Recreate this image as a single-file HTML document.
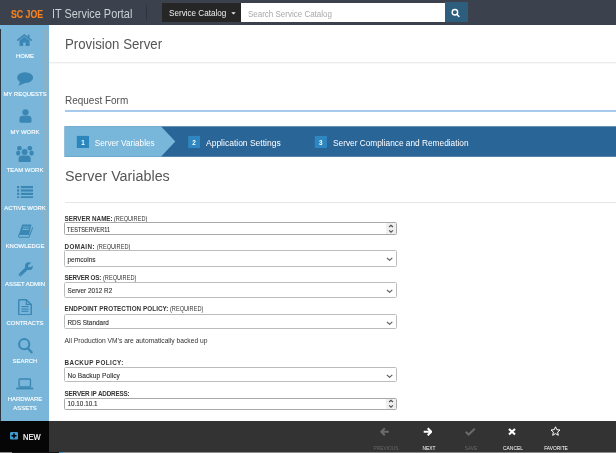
<!DOCTYPE html>
<html><head><meta charset="utf-8">
<style>
html,body{margin:0;padding:0;width:616px;height:453px;overflow:hidden;background:#fff;}
body{position:relative;font-family:"Liberation Sans",sans-serif;}
.a{position:absolute;}
.t{position:absolute;white-space:nowrap;line-height:1;transform-origin:0 0;}
.hdr{left:0;top:0;width:616px;height:25px;background:#3b424e;}
.side{left:0;top:25px;width:49px;height:396px;background:#79b6d9;}
.sl{position:absolute;left:-25px;width:100px;text-align:center;color:#fff;font-weight:normal;font-size:13px;line-height:13px;white-space:nowrap;transform:scale(0.458,0.475);transform-origin:50% 0;-webkit-text-stroke:0.3px #fff;}
.ico{position:absolute;fill:#3a87b5;}
.lbl{position:absolute;font-size:6.3px;line-height:6.3px;color:#333;white-space:nowrap;}
.lbl b{font-weight:bold;}
.lbl span{color:#333;font-size:6.3px;display:inline-block;transform:scaleX(0.89);transform-origin:0 50%;}
.inp{position:absolute;left:64px;width:333px;border:1px solid #bcbcbc;border-radius:1.5px;background:#fff;box-sizing:border-box;}
.val{position:absolute;left:67.4px;font-size:6.3px;line-height:6.3px;color:#333;white-space:nowrap;-webkit-text-stroke:0.12px #333;letter-spacing:0.05px;}
.bb{position:absolute;text-align:center;width:40px;font-size:6.1px;line-height:6.1px;white-space:nowrap;transform:scaleX(0.8);transform-origin:50% 0;}
</style></head><body>
<div id="w" style="position:absolute;left:0;top:0;width:616px;height:453px;will-change:transform">
<!-- header -->
<div class="a hdr"></div>
<div class="t" style="left:11.2px;top:9.6px;font-size:10.2px;font-weight:bold;color:#f7811e;transform:scaleX(0.86);-webkit-text-stroke:0.15px #f7811e">SC JOE</div>
<div class="t" style="left:51.6px;top:7.5px;font-size:12.3px;color:#cdd1d5;transform:scaleX(0.886)">IT Service Portal</div>
<div class="a" style="left:146px;top:5px;width:1px;height:15px;background:#2e343d"></div>
<div class="a" style="left:162px;top:3px;width:79px;height:19px;background:#262626"></div>
<div class="t" style="left:168.8px;top:8.6px;font-size:8.5px;color:#f0f0f0;transform:scaleX(0.955)">Service Catalog</div>
<svg class="a" style="left:230.5px;top:12px" width="5" height="3" viewBox="0 0 5 3"><path d="M0.3 0.2H4.7L2.5 2.6Z" fill="#eee"/></svg>
<div class="a" style="left:241px;top:3px;width:204px;height:18.5px;background:#fff"></div>
<div class="t" style="left:248.4px;top:9.9px;font-size:8.9px;color:#a8a8a8;transform:scaleX(0.9)">Search Service Catalog</div>
<div class="a" style="left:445px;top:2.3px;width:23px;height:19.6px;background:#2e5e7e"></div>
<svg class="a" style="left:451px;top:7px" width="11" height="11" viewBox="0 0 11 11"><circle cx="3.9" cy="5.2" r="2.75" fill="none" stroke="#fff" stroke-width="1.35"/><path d="M5.9 7.3L7.9 9.4" stroke="#fff" stroke-width="1.4" stroke-linecap="round"/></svg>

<!-- sidebar -->
<div class="a side"></div>
<div class="a" style="left:0;top:29px;width:1px;height:392px;background:#2a3640"></div>
<div class="a" style="left:44px;top:29px;width:3.5px;height:279.5px;background:#8ab2c7"></div>

<!-- home -->
<svg class="ico" style="left:17px;top:34px" width="15" height="12.5" viewBox="0 0 15 12.5"><path d="M0.8 6.1L7.2 1.1L14.2 6.1" fill="none" stroke="#3a87b5" stroke-width="1.7" stroke-linecap="round"/><rect x="10.8" y="0.6" width="1.7" height="3.4"/><path d="M2.5 6.4L7.2 2.7L12.6 6.4V11.9H8.6V8.5H6.2V11.9H2.5Z"/></svg>
<div class="sl" style="top:52.87px">HOME</div>
<!-- requests -->
<svg class="ico" style="left:17px;top:72px" width="16.2" height="14" viewBox="0 0 16.2 14"><ellipse cx="8.1" cy="5.6" rx="8" ry="5.4"/><path d="M3.8 8.8L1.3 13.7L9.5 10.6Z"/></svg>
<div class="sl" style="top:90.77px">MY REQUESTS</div>
<!-- my work -->
<svg class="ico" style="left:18.5px;top:109.3px" width="13" height="14" viewBox="0 0 13 14"><path d="M0.4 10C0.4 7.8 1.9 6.7 3.5 6.7H9.4C11 6.7 12.5 7.8 12.5 10V12.3C12.5 13.1 12 13.7 11.2 13.7H1.7C0.9 13.7 0.4 13.1 0.4 12.3Z"/><circle cx="6.5" cy="3.3" r="3.1" stroke="#79b6d9" stroke-width="0.7" paint-order="stroke"/></svg>
<div class="sl" style="top:128.77px">MY WORK</div>
<!-- team work -->
<svg class="ico" style="left:16.3px;top:146.3px" width="17.8" height="16.2" viewBox="0 0 17.8 16.2"><circle cx="3.45" cy="2.2" r="2.3"/><circle cx="13.85" cy="2.2" r="2.3"/><ellipse cx="2.2" cy="7.1" rx="2.2" ry="2.6"/><ellipse cx="15.6" cy="7.1" rx="2.2" ry="2.6"/><path d="M2.6 12.4C2.6 10.4 4 9.4 5.6 9.4H11.7C13.3 9.4 14.7 10.4 14.7 12.4V14.9C14.7 15.7 14.2 16.2 13.4 16.2H3.9C3.1 16.2 2.6 15.7 2.6 14.9Z" stroke="#79b6d9" stroke-width="0.7" paint-order="stroke"/><circle cx="8.6" cy="5.9" r="3" stroke="#79b6d9" stroke-width="0.8" paint-order="stroke"/></svg>
<div class="sl" style="top:167.37px">TEAM WORK</div>
<!-- active work -->
<svg class="ico" style="left:17px;top:185.7px" width="16.2" height="12.5" viewBox="0 0 16.2 12.5"><rect x="0" y="0" width="2.2" height="2.2"/><rect x="3.8" y="0" width="12.4" height="2.2"/><rect x="0" y="3.4" width="2.2" height="2.2"/><rect x="3.8" y="3.4" width="12.4" height="2.2"/><rect x="0" y="6.8" width="2.2" height="2.2"/><rect x="3.8" y="6.8" width="12.4" height="2.2"/><rect x="0" y="10.3" width="2.2" height="2.2"/><rect x="3.8" y="10.3" width="12.4" height="2.2"/></svg>
<div class="sl" style="top:205.37px">ACTIVE WORK</div>
<!-- knowledge -->
<svg class="ico" style="left:17.7px;top:223.7px" width="15.5" height="14" viewBox="0 0 15.5 14"><path d="M4.3 0.4H12.7C13.2 0.4 13.4 0.8 13.3 1.3L11 11H0.6Z"/><path d="M0.8 10.9C0.2 12.3 0.8 13.2 1.9 13.2H10.9L14.8 3.4" fill="none" stroke="#3a87b5" stroke-width="1.05"/><path d="M5.1 2.4H11.6L11.3 3.6H4.8Z" fill="#70b1d6"/><path d="M4.5 4.8H11L10.7 6H4.2Z" fill="#70b1d6"/></svg>
<div class="sl" style="top:243.37px">KNOWLEDGE</div>
<!-- asset admin -->
<svg class="ico" style="left:17.7px;top:262px" width="15" height="15" viewBox="0 0 15 15"><path d="M2.3 12.6L8.6 6.5" stroke="#3a87b5" stroke-width="3.2" stroke-linecap="round"/><circle cx="10.9" cy="4.2" r="3.9"/><path d="M10.6 3.9L13.2 0.2L16 3L12 5.4Z" fill="#79b6d9"/><circle cx="11.3" cy="3.8" r="1.3" fill="#79b6d9"/><circle cx="2.3" cy="12.6" r="0.5" fill="#79b6d9"/></svg>
<div class="sl" style="top:281.37px">ASSET ADMIN</div>
<!-- contracts -->
<svg class="ico" style="left:18px;top:298.7px" width="14.2" height="16.5" viewBox="0 0 14.2 16.5"><path d="M1.6 0.75H8.3L13.25 5.6V14.9C13.25 15.4 13 15.6 12.6 15.6H1.4C1 15.6 0.75 15.4 0.75 14.9V1.6C0.75 1.1 1 0.75 1.6 0.75Z" fill="none" stroke="#3a87b5" stroke-width="1.4" stroke-linejoin="round"/><path d="M8.3 0.9V5.3H13.1" fill="none" stroke="#3a87b5" stroke-width="1.2"/><rect x="3.5" y="7" width="7" height="1.15"/><rect x="3.5" y="9.5" width="7" height="1.15"/><rect x="3.5" y="11.7" width="7" height="1.15"/></svg>
<div class="sl" style="top:319.67px">CONTRACTS</div>
<!-- search -->
<svg class="ico" style="left:17.7px;top:337.7px" width="15.5" height="16" viewBox="0 0 15.5 16"><circle cx="6.2" cy="6.2" r="5.1" fill="none" stroke="#3a87b5" stroke-width="2"/><path d="M9.8 10.2L13.6 14.3" stroke="#3a87b5" stroke-width="2.2" stroke-linecap="round"/></svg>
<div class="sl" style="top:357.67px">SEARCH</div>
<!-- hardware -->
<svg class="ico" style="left:16.4px;top:377.5px" width="17.5" height="12" viewBox="0 0 17.5 12"><rect x="3.05" y="0.95" width="11.4" height="8" rx="1" fill="none" stroke="#3a87b5" stroke-width="1.35"/><rect x="0.2" y="9.6" width="17" height="1.8"/></svg>
<div class="sl" style="top:395.97px">HARDWARE</div>
<div class="sl" style="top:405.07px">ASSETS</div>

<!-- main -->
<div class="t" style="left:64.7px;top:36.6px;font-size:14.4px;color:#555;transform:scaleX(0.92)">Provision Server</div>
<div class="a" style="left:49px;top:62px;width:567px;height:1px;background:#ececec"></div><div class="a" style="left:49px;top:63px;width:567px;height:1px;background:#f8f8f8"></div>
<div class="t" style="left:64.5px;top:95.1px;font-size:10.5px;color:#505050;transform:scaleX(0.95)">Request Form</div>
<div class="a" style="left:64.5px;top:110px;width:552px;height:2px;background:#a4cbec"></div>

<!-- steps -->
<svg class="a" style="left:0;top:0" width="616" height="160" viewBox="0 0 616 160"><rect x="64.6" y="126.3" width="551.4" height="30.5" fill="#2a6598"/><path d="M64.6 126.3H160.9L175.3 141.55L160.9 156.8H64.6Z" fill="#79b7da"/><rect x="76.8" y="135.9" width="12.2" height="12.1" fill="#2a86bd"/><rect x="188.2" y="135.9" width="11.8" height="12.1" fill="#2e87c0"/><rect x="314.8" y="135.9" width="12.1" height="12.1" fill="#2e87c0"/></svg>
<div class="t" style="left:76.8px;top:140.1px;width:12.2px;text-align:center;font-size:6.3px;font-weight:bold;color:#fff">1</div>
<div class="t" style="left:94.7px;top:139.9px;font-size:8.2px;color:#fff">Server Variables</div>
<div class="t" style="left:188.2px;top:140.1px;width:11.8px;text-align:center;font-size:6.3px;font-weight:bold;color:#fff">2</div>
<div class="t" style="left:206px;top:139.1px;font-size:8.5px;color:#fff">Application Settings</div>
<div class="t" style="left:314.8px;top:140.1px;width:12.1px;text-align:center;font-size:6.3px;font-weight:bold;color:#fff">3</div>
<div class="t" style="left:333px;top:139.1px;font-size:8.3px;color:#fff">Server Compliance and Remediation</div>

<div class="t" style="left:65px;top:168.3px;font-size:15.4px;color:#555;transform:scaleX(0.93)">Server Variables</div>
<div class="a" style="left:65px;top:202px;width:551px;height:1px;background:#e6e6e6"></div>

<!-- form -->
<div class="lbl" style="left:64.5px;top:216.1px"><b>SERVER NAME:</b> <span>(REQUIRED)</span></div>
<div class="inp" style="top:222.3px;height:12.5px;border-color:#a9a9a9"></div>
<div class="a" style="left:386px;top:223px;width:10px;height:11px;background:#efefef"></div>
<svg class="a" style="left:388px;top:223.8px" width="6" height="9" viewBox="0 0 6 9"><path d="M1.1 3L3 1.3L4.9 3M1.1 6.4L3 8.1L4.9 6.4" fill="none" stroke="#505050" stroke-width="1.25"/></svg>
<div class="val" style="top:227.1px;font-size:6.3px;transform:scaleX(0.88);transform-origin:0 0">TESTSERVER11</div>

<div class="lbl" style="left:64.5px;top:244.1px"><b style="letter-spacing:0.4px">DOMAIN:</b> <span>(REQUIRED)</span></div>
<div class="inp" style="top:250.3px;height:16.6px"></div>
<div class="val" style="top:256.9px;font-size:6.5px">pemcoins</div>
<svg class="a" style="left:386px;top:257.4px" width="7" height="4" viewBox="0 0 7 4"><path d="M0.9 0.8L3.6 3.3L6.3 0.8" fill="none" stroke="#5a5a5a" stroke-width="1.15"/></svg>

<div class="lbl" style="left:64.5px;top:274.5px"><b style="letter-spacing:-0.22px">SERVER OS:</b> <span>(REQUIRED)</span></div>
<div class="inp" style="top:282.4px;height:15.6px"></div>
<div class="val" style="top:288.3px;font-size:6.3px">Server 2012 R2</div>
<svg class="a" style="left:386px;top:289.4px" width="7" height="4" viewBox="0 0 7 4"><path d="M0.9 0.8L3.6 3.3L6.3 0.8" fill="none" stroke="#5a5a5a" stroke-width="1.15"/></svg>

<div class="lbl" style="left:64.5px;top:305.8px"><b style="letter-spacing:0.06px">ENDPOINT PROTECTION POLICY:</b> <span>(REQUIRED)</span></div>
<div class="inp" style="top:313.8px;height:14.8px"></div>
<div class="val" style="top:319.5px;font-size:6.35px">RDS Standard</div>
<svg class="a" style="left:386px;top:320.5px" width="7" height="4" viewBox="0 0 7 4"><path d="M0.9 0.8L3.6 3.3L6.3 0.8" fill="none" stroke="#5a5a5a" stroke-width="1.15"/></svg>

<div class="t" style="left:64.5px;top:338.3px;font-size:6.7px;color:#333">All Production VM's are automatically backed up</div>

<div class="lbl" style="left:64.5px;top:359.6px"><b style="letter-spacing:0.4px">BACKUP POLICY:</b></div>
<div class="inp" style="top:366.9px;height:14.8px"></div>
<div class="val" style="top:372.9px;font-size:6.6px">No Backup Policy</div>
<svg class="a" style="left:386px;top:373.8px" width="7" height="4" viewBox="0 0 7 4"><path d="M0.9 0.8L3.6 3.3L6.3 0.8" fill="none" stroke="#5a5a5a" stroke-width="1.15"/></svg>

<div class="lbl" style="left:64.5px;top:390.5px"><b style="letter-spacing:-0.15px">SERVER IP ADDRESS:</b></div>
<div class="inp" style="top:398px;height:11.5px;border-color:#a9a9a9"></div>
<div class="a" style="left:386px;top:399px;width:10px;height:10px;background:#efefef"></div>
<svg class="a" style="left:388px;top:399px" width="6" height="9" viewBox="0 0 6 9"><path d="M1.1 3L3 1.3L4.9 3M1.1 6.4L3 8.1L4.9 6.4" fill="none" stroke="#505050" stroke-width="1.25"/></svg>
<div class="val" style="top:401.1px">10.10.10.1</div>

<!-- bottom bar -->
<div class="a" style="left:0;top:421px;width:616px;height:31px;background:#333"></div>
<div class="a" style="left:0;top:421px;width:49px;height:31px;background:#060606"></div>
<div class="a" style="left:0;top:452px;width:616px;height:1px;background:#8c8c8c"></div><div class="a" style="left:12px;top:452px;width:47px;height:1px;background:#151515"></div><div class="a" style="left:59px;top:452px;width:4px;height:1px;background:#3a8fc0"></div>
<svg class="a" style="left:9.6px;top:432.2px" width="8" height="7.4" viewBox="0 0 8 7.4"><rect width="8" height="7.4" rx="1.2" fill="#3d9bd2"/><path d="M4 1.2V6.2M1.5 3.7H6.5" stroke="#000" stroke-width="1.5"/></svg>
<div class="t" style="left:22.7px;top:433.1px;font-size:8.6px;color:#fff;transform:scaleX(0.875);-webkit-text-stroke:0.2px #fff">NEW</div>

<svg class="a" style="left:380.3px;top:427px" width="9.5" height="9.4" viewBox="0 0 9.5 9.4"><path d="M8.8 4.7H2M4.8 1.2L1.2 4.7L4.8 8.2" fill="none" stroke="#6b6b6b" stroke-width="2"/></svg>
<div class="bb" style="left:365.5px;top:445.3px;color:#666">PREVIOUS</div>
<svg class="a" style="left:422.7px;top:427px" width="9.5" height="9.4" viewBox="0 0 9.5 9.4"><path d="M0.7 4.7H7.5M4.7 1.2L8.3 4.7L4.7 8.2" fill="none" stroke="#fff" stroke-width="2"/></svg>
<div class="bb" style="left:408.5px;top:445.3px;color:#fff">NEXT</div>
<svg class="a" style="left:465px;top:427.5px" width="10.5" height="8" viewBox="0 0 10.5 8"><path d="M0.8 3.8L3.6 6.6L9.8 0.8" fill="none" stroke="#6b6b6b" stroke-width="2"/></svg>
<div class="bb" style="left:450.5px;top:445.3px;color:#666">SAVE</div>
<svg class="a" style="left:508.3px;top:428px" width="8" height="7.5" viewBox="0 0 8 7.5"><path d="M1 1L7 6.5M7 1L1 6.5" stroke="#fff" stroke-width="2.2"/></svg>
<div class="bb" style="left:492.9px;top:445.3px;color:#fff">CANCEL</div>
<svg class="a" style="left:549.5px;top:425.8px" width="11" height="10" viewBox="0 0 11 10"><path d="M5.5 0.8L6.8 3.7L10 4L7.6 6.1L8.3 9.3L5.5 7.6L2.7 9.3L3.4 6.1L1 4L4.2 3.7Z" fill="none" stroke="#fff" stroke-width="1"/></svg>
<div class="bb" style="left:535.6px;top:445.3px;color:#fff">FAVORITE</div>
</div>
</body></html>
